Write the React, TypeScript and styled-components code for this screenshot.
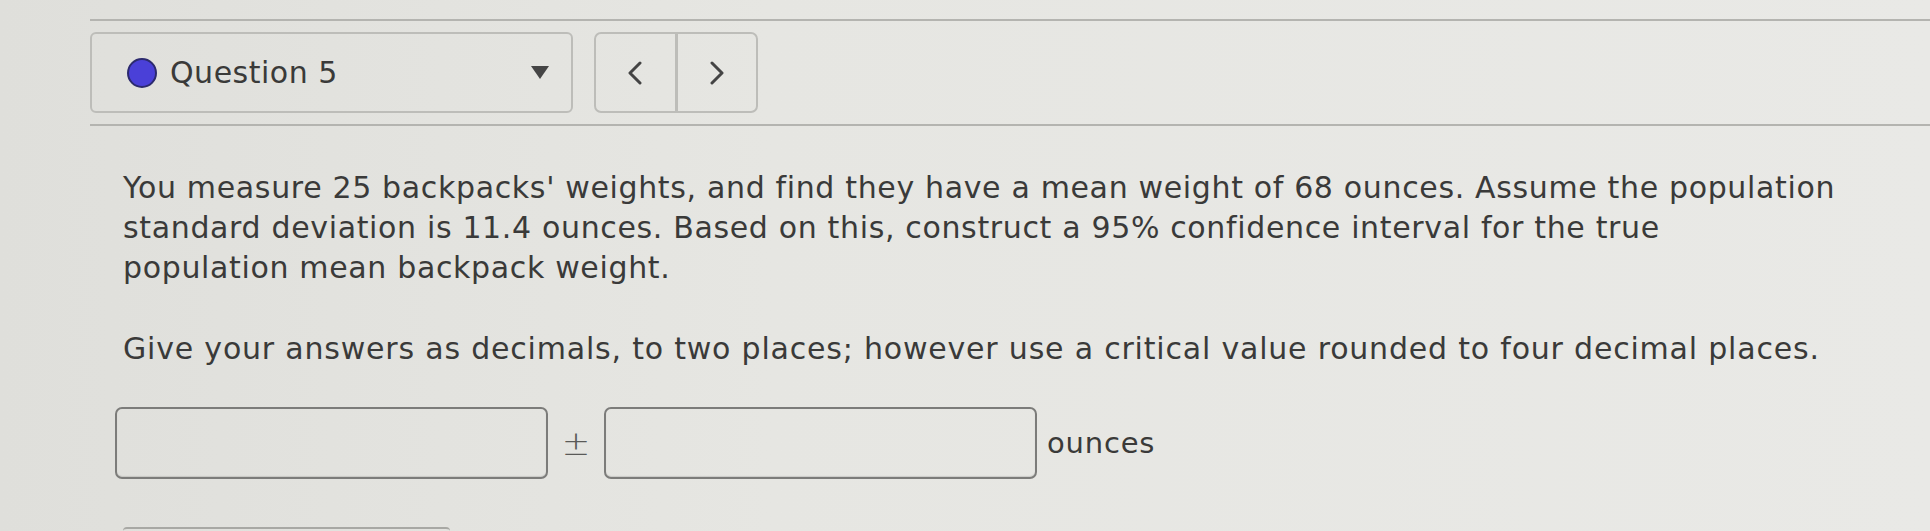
import React from 'react'
import styled, { createGlobalStyle } from 'styled-components'

const GlobalStyle = createGlobalStyle`
  html, body {
    margin: 0;
    padding: 0;
  }
  body {
    width: 1930px;
    height: 531px;
    overflow: hidden;
    background: linear-gradient(90deg, #dfdfdb 0%, #e6e6e2 40%, #e9e9e6 100%);
    font-family: 'DejaVu Sans', 'Open Sans', sans-serif;
    color: #3a3a39;
  }
`

const Page = styled.main`
  padding-top: 19px;
`

const QuestionBar = styled.header`
  margin-left: 90px;
  border-top: 2px solid #b4b4b0;
  border-bottom: 2px solid #b4b4b0;
  padding: 11px 0 11px;
  display: flex;
  gap: 21px;
`

const Selector = styled.div`
  box-sizing: border-box;
  width: 483px;
  height: 81px;
  border: 2px solid #bdbdb9;
  border-radius: 6px;
  display: flex;
  align-items: center;
  padding: 0 22px 0 35px;
`

const Dot = styled.span`
  width: 26px;
  height: 26px;
  border-radius: 50%;
  background: #4a40d8;
  border: 2px solid #2c2a6e;
  margin-right: 13px;
  flex-shrink: 0;
`

const SelectorLabel = styled.span`
  font-size: 30px;
  letter-spacing: 0.5px;
  flex: 1;
`

const Caret = styled.span`
  width: 0;
  height: 0;
  border-left: 9px solid transparent;
  border-right: 9px solid transparent;
  border-top: 13px solid #454545;
`

const NavGroup = styled.div`
  box-sizing: border-box;
  width: 164px;
  height: 81px;
  border: 2px solid #bdbdb9;
  border-radius: 7px;
  display: flex;
`

const NavButton = styled.button<{ $divider?: boolean }>`
  flex: 1;
  background: transparent;
  border: none;
  border-right: ${p => (p.$divider ? '3px solid #bdbdb9' : 'none')};
  display: flex;
  align-items: center;
  justify-content: center;
  padding: 0;
  color: #444;
`

const Body = styled.section`
  padding: 42px 0 0 123px;
  width: 1760px;
`

const Para = styled.p<{ $gap?: number; $spacing?: number }>`
  margin: 0 0 ${p => p.$gap ?? 0}px;
  font-size: 30px;
  letter-spacing: ${p => p.$spacing ?? 0.8}px;
  line-height: 40px;
`

const AnswerRow = styled.div`
  display: flex;
  align-items: center;
  margin-top: 38px;
  margin-left: -8px;
`

const AnswerBox = styled.input`
  box-sizing: border-box;
  width: 433px;
  height: 72px;
  border: 2px solid #7c7c7a;
  border-radius: 7px;
  background: transparent;
  box-shadow: inset 0 -1px 1px rgba(0, 0, 0, 0.12);
`

const PlusMinus = styled.span`
  width: 56px;
  text-align: center;
  font-size: 34px;
  font-weight: 300;
  color: #5a5a58;
`

const Unit = styled.span`
  margin-left: 10px;
  font-size: 29px;
  letter-spacing: 0.8px;
`

const SubmitEdge = styled.div`
  margin-top: 48px;
  width: 327px;
  height: 20px;
  border-top: 2px solid #a8a8a4;
  border-radius: 4px 4px 0 0;
`

const Chevron = ({ dir }: { dir: 'left' | 'right' }) => (
  <svg width='16' height='24' viewBox='0 0 16 24' fill='none'>
    <path
      d={dir === 'left' ? 'M13 2 L3 12 L13 22' : 'M3 2 L13 12 L3 22'}
      stroke='currentColor'
      strokeWidth='3'
      strokeLinecap='round'
      strokeLinejoin='round'
    />
  </svg>
)

export default function App() {
  return (
    <>
      <GlobalStyle />
      <Page>
        <QuestionBar>
          <Selector>
            <Dot />
            <SelectorLabel>Question 5</SelectorLabel>
            <Caret />
          </Selector>
          <NavGroup>
            <NavButton $divider aria-label='Previous question'>
              <Chevron dir='left' />
            </NavButton>
            <NavButton aria-label='Next question'>
              <Chevron dir='right' />
            </NavButton>
          </NavGroup>
        </QuestionBar>

        <Body>
          <Para $gap={41} $spacing={0.65}>
            You measure 25 backpacks' weights, and find they have a mean weight of 68 ounces.
            Assume the population
            <br />
            standard deviation is 11.4 ounces. Based on this, construct a 95% confidence interval
            for the true
            <br />
            population mean backpack weight.
          </Para>
          <Para>
            Give your answers as decimals, to two places; however use a critical value rounded to
            four decimal places.
          </Para>

          <AnswerRow>
            <AnswerBox aria-label='Point estimate' />
            <PlusMinus>±</PlusMinus>
            <AnswerBox aria-label='Margin of error' />
            <Unit>ounces</Unit>
          </AnswerRow>

          <SubmitEdge />
        </Body>
      </Page>
    </>
  )
}
